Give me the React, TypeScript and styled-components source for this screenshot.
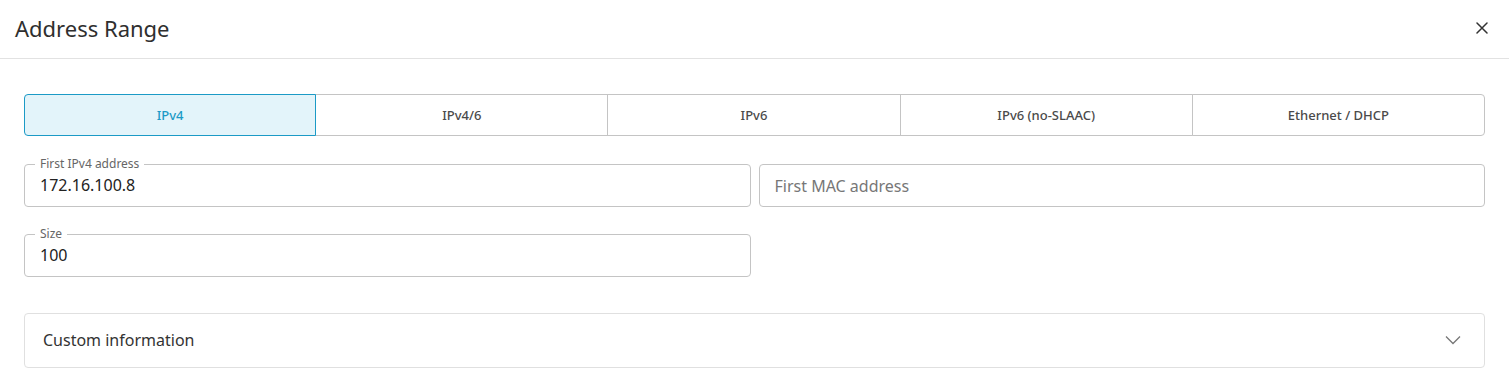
import { useState } from "react";
import styled, { createGlobalStyle } from "styled-components";

const GlobalStyle = createGlobalStyle`
  * {
    box-sizing: border-box;
  }
  body {
    margin: 0;
    background: #ffffff;
    font-family: "Noto Sans", "Open Sans", sans-serif;
    color: #333333;
  }
`;

const tabs = ["IPv4", "IPv4/6", "IPv6", "IPv6 (no-SLAAC)", "Ethernet / DHCP"];

const App: React.FC = () => {
  const [activeTab, setActiveTab] = useState(0);

  return (
    <Dialog>
      <GlobalStyle />
      <Header>
        <Title>Address Range</Title>
        <CloseButton aria-label="Close">
          <svg width="12" height="12" viewBox="0 0 12 12">
            <path d="M1 1 L11 11 M11 1 L1 11" stroke="#333" strokeWidth="1.5" strokeLinecap="round" />
          </svg>
        </CloseButton>
      </Header>
      <Content>
        <TabGroup>
          {tabs.map((t, index) => (
            <TabButton
              key={t}
              $active={activeTab === index}
              onClick={() => setActiveTab(index)}
            >
              {t}
            </TabButton>
          ))}
        </TabGroup>

        <FieldRow>
          <OutlinedField>
            <Legend>First IPv4 address</Legend>
            <FieldInput defaultValue="172.16.100.8" />
          </OutlinedField>
          <PlainInput placeholder="First MAC address" />
        </FieldRow>

        <FieldRow>
          <OutlinedField>
            <Legend>Size</Legend>
            <FieldInput defaultValue="100" />
          </OutlinedField>
        </FieldRow>

        <Accordion>
          <AccordionTitle>Custom information</AccordionTitle>
          <svg width="16" height="10" viewBox="0 0 16 10">
            <path d="M1 1.5 L8 8.5 L15 1.5" fill="none" stroke="#777" strokeWidth="1.3" />
          </svg>
        </Accordion>
      </Content>
    </Dialog>
  );
};

export default App;

const Dialog = styled.div`
  width: 1509px;
  height: 372px;
  overflow: hidden;
  background: #fff;
`;

const Header = styled.div`
  height: 59px;
  display: flex;
  align-items: center;
  justify-content: space-between;
  padding: 0 20px 3px 15px;
  border-bottom: 1px solid #e2e2e2;
`;

const Title = styled.h2`
  margin: 0;
  font-size: 22px;
  line-height: 28px;
  font-weight: 400;
  color: #2f2f2f;
`;

const CloseButton = styled.button`
  border: none;
  background: none;
  padding: 0;
  width: 14px;
  height: 14px;
  display: flex;
  align-items: center;
  justify-content: center;
  cursor: pointer;
`;

const Content = styled.div`
  padding: 35px 24px 0;
  display: flex;
  flex-direction: column;
`;

const TabGroup = styled.div`
  display: grid;
  grid-template-columns: repeat(5, 1fr);
  height: 42px;
  margin-bottom: 20px;
`;

const TabButton = styled.button<{ $active: boolean }>`
  position: relative;
  z-index: ${({ $active }) => ($active ? 1 : 0)};
  margin-left: -1px;
  border: 1px solid ${({ $active }) => ($active ? "#1b9ac6" : "#c4c4c4")};
  background: ${({ $active }) => ($active ? "#e3f4fa" : "#fff")};
  color: ${({ $active }) => ($active ? "#1b9ac6" : "#4a4a4a")};
  font-family: inherit;
  font-size: 13px;
  font-weight: 500;
  cursor: pointer;

  &:first-child {
    margin-left: 0;
    border-radius: 4px 0 0 4px;
  }

  &:last-child {
    border-radius: 0 4px 4px 0;
  }
`;

const FieldRow = styled.div`
  display: grid;
  grid-template-columns: 1fr 1fr;
  column-gap: 8px;
  align-items: end;
  margin-bottom: 19px;
`;

const OutlinedField = styled.fieldset`
  margin: 0;
  padding: 0 15px 8px;
  border: 1px solid #c4c4c4;
  border-radius: 4px;
  min-width: 0;
`;

const Legend = styled.legend`
  margin-left: -5px;
  padding: 0 5px;
  font-size: 12px;
  line-height: 16px;
  color: #666;
`;

const FieldInput = styled.input`
  display: block;
  width: 100%;
  height: 26px;
  border: none;
  outline: none;
  padding: 0;
  font-family: inherit;
  font-size: 16px;
  color: #222;
  background: transparent;
`;

const PlainInput = styled.input`
  height: 43px;
  width: 100%;
  border: 1px solid #c4c4c4;
  border-radius: 4px;
  padding: 0 15px;
  outline: none;
  font-family: inherit;
  font-size: 16px;
  color: #222;

  &::placeholder {
    color: #777;
  }
`;

const Accordion = styled.div`
  height: 55px;
  margin-top: 17px;
  display: flex;
  align-items: center;
  justify-content: space-between;
  padding: 0 23px 1px 18px;
  border: 1px solid #e0e0e0;
  border-radius: 4px;
`;

const AccordionTitle = styled.span`
  font-size: 16px;
  color: #333;
`;
